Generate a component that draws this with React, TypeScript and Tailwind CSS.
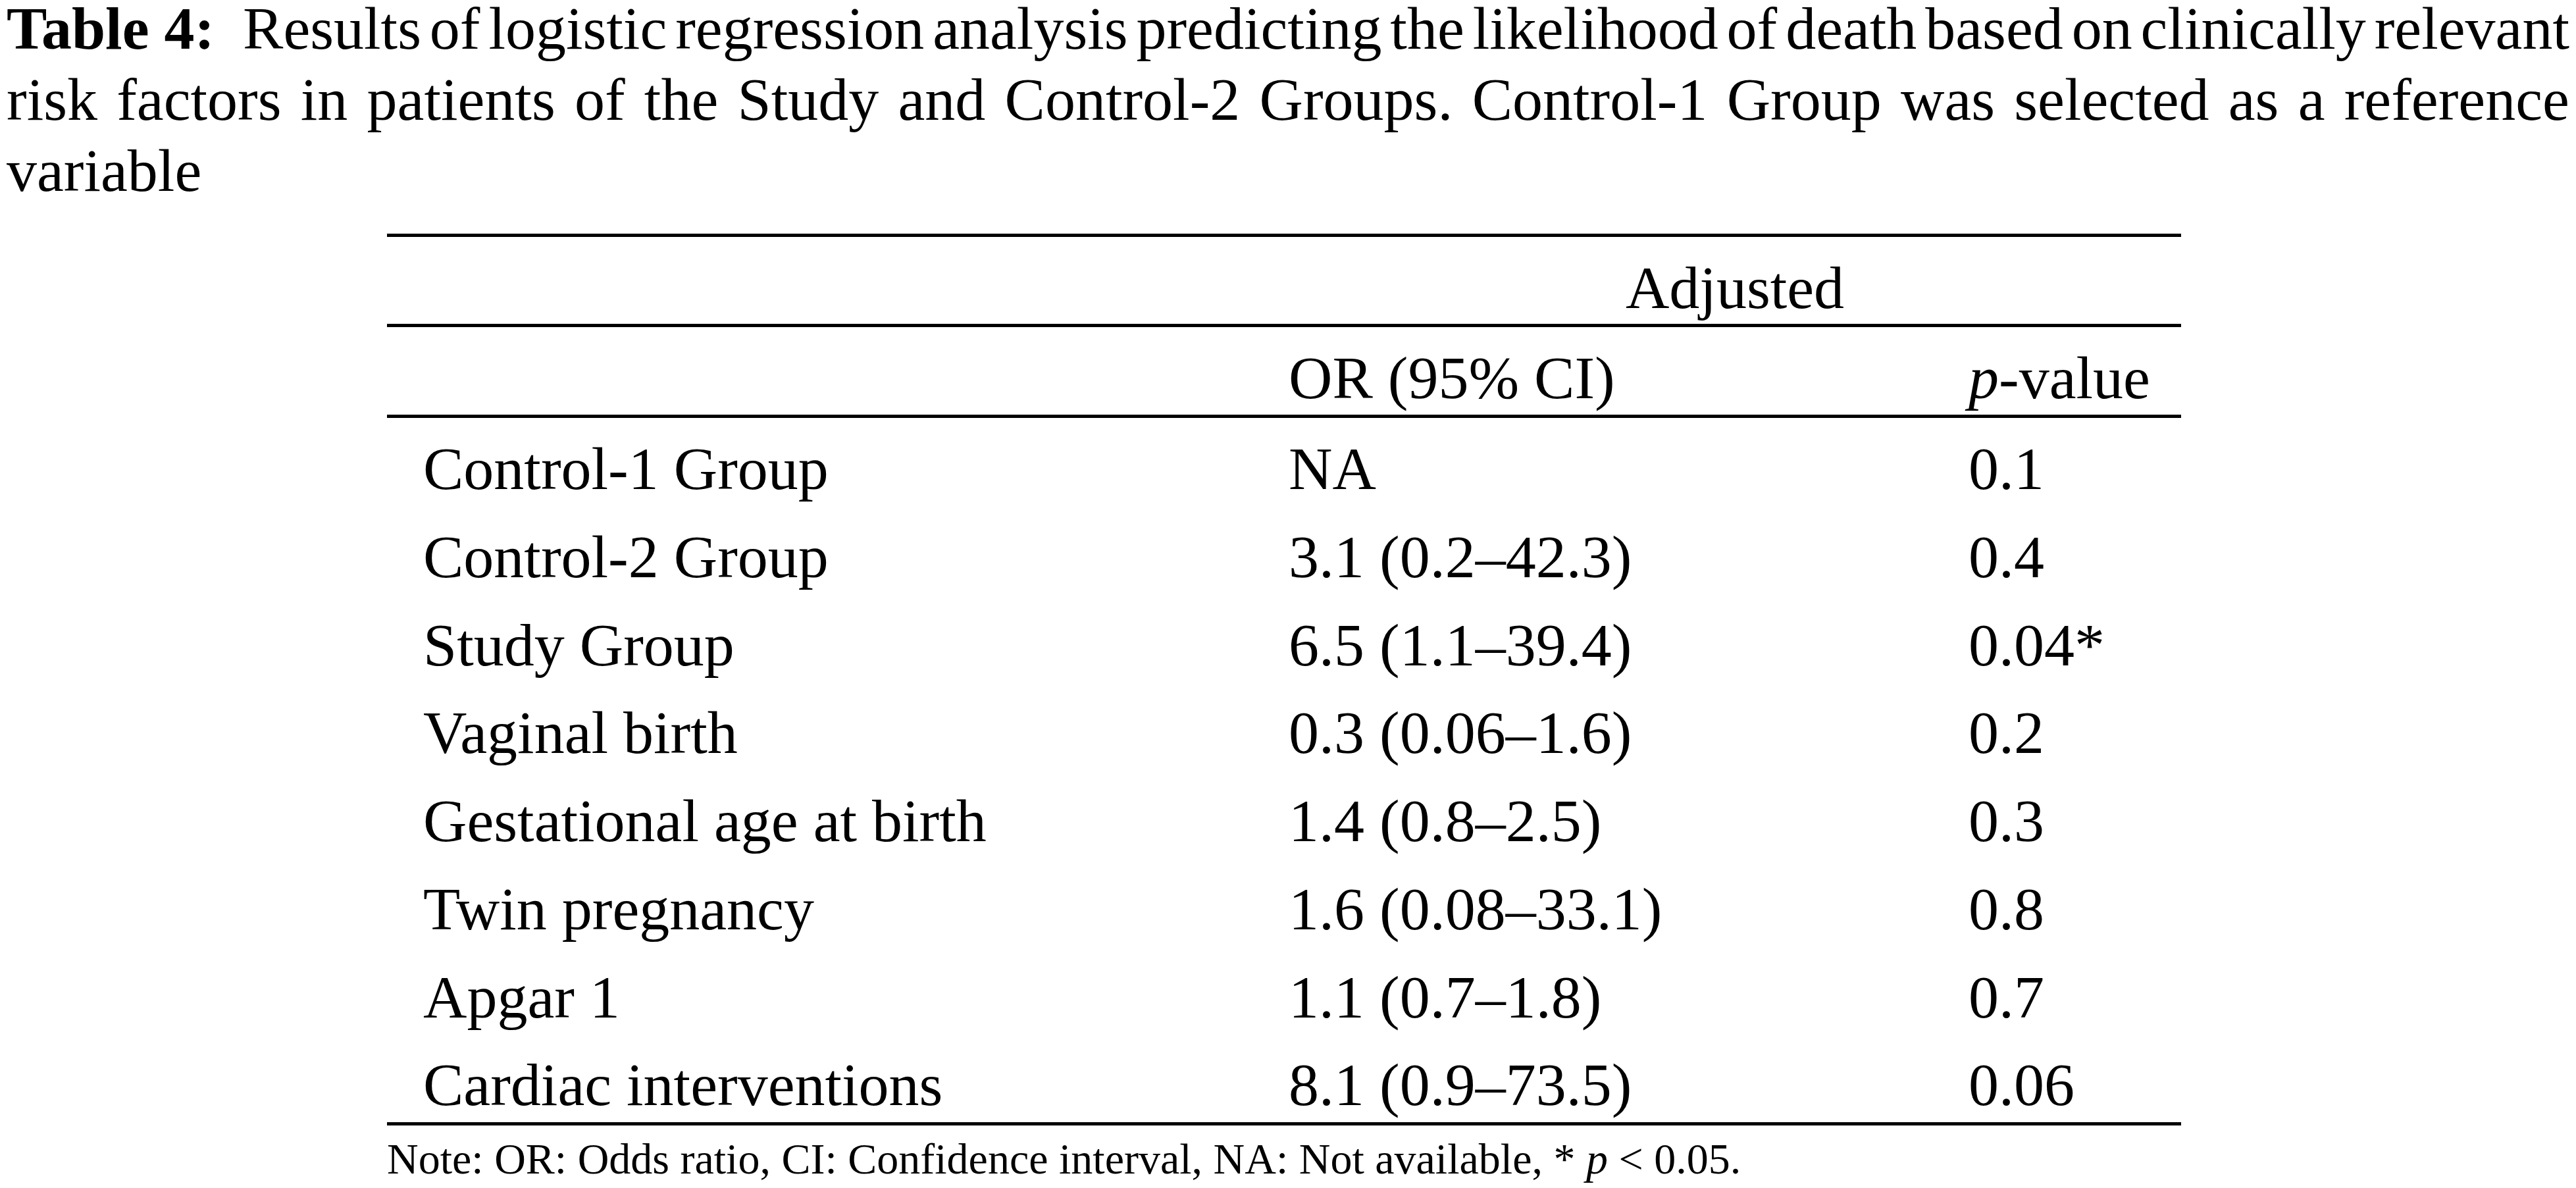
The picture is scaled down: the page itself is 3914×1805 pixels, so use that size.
import React from "react";

const line1 = [
  "Results",
  "of",
  "logistic",
  "regression",
  "analysis",
  "predicting",
  "the",
  "likelihood",
  "of",
  "death",
  "based",
  "on",
  "clinically",
  "relevant",
];

const line2 = [
  "risk",
  "factors",
  "in",
  "patients",
  "of",
  "the",
  "Study",
  "and",
  "Control-2",
  "Groups.",
  "Control-1",
  "Group",
  "was",
  "selected",
  "as",
  "a",
  "reference",
];

const rows: [string, string, string][] = [
  ["Control-1 Group", "NA", "0.1"],
  ["Control-2 Group", "3.1 (0.2–42.3)", "0.4"],
  ["Study Group", "6.5 (1.1–39.4)", "0.04*"],
  ["Vaginal birth", "0.3 (0.06–1.6)", "0.2"],
  ["Gestational age at birth", "1.4 (0.8–2.5)", "0.3"],
  ["Twin pregnancy", "1.6 (0.08–33.1)", "0.8"],
  ["Apgar 1", "1.1 (0.7–1.8)", "0.7"],
  ["Cardiac interventions", "8.1 (0.9–73.5)", "0.06"],
];

export default function App() {
  return (
    <div className="w-[3914px] h-[1805px] overflow-hidden bg-white text-black font-['Liberation_Serif','Times_New_Roman',serif]">
      {/* Caption */}
      <div className="pl-[10px] w-[3904px] text-[92px] leading-[108px] -mt-[11px]">
        <div className="flex justify-between whitespace-nowrap">
          <span className="font-bold mr-[30px]">Table 4:</span>
          {line1.map((w, i) => (
            <span key={i}>{w}</span>
          ))}
        </div>
        <div className="flex justify-between whitespace-nowrap">
          {line2.map((w, i) => (
            <span key={i}>{w}</span>
          ))}
        </div>
        <div className="whitespace-nowrap">variable</div>
      </div>

      {/* Table */}
      <div className="ml-[588px] w-[2726px] mt-[42px]">
        <table className="w-[2726px] table-fixed border-separate border-spacing-0 border-t-[5px] border-black text-[92px]">
          <colgroup>
            <col className="w-[1315px]" />
            <col className="w-[1033px]" />
            <col className="w-[378px]" />
          </colgroup>
          <thead>
            <tr>
              <th className="p-0 border-b-[5px] border-black"></th>
              <th
                colSpan={2}
                className="p-0 pl-[55px] pt-[26px] pb-[4px] leading-[102px] font-normal text-center whitespace-nowrap border-b-[5px] border-black"
              >
                Adjusted
              </th>
            </tr>
            <tr>
              <th className="p-0 border-b-[5px] border-black"></th>
              <th className="p-0 pl-[55px] pt-[26px] pb-[5px] leading-[102px] font-normal text-left whitespace-nowrap border-b-[5px] border-black">
                OR (95% CI)
              </th>
              <th className="p-0 pl-[55px] pt-[26px] pb-[5px] leading-[102px] font-normal text-left whitespace-nowrap border-b-[5px] border-black">
                <i>p</i>-value
              </th>
            </tr>
          </thead>
          <tbody>
            {rows.map((r, i) => {
              const last = i === rows.length - 1;
              const cls = last
                ? "p-0 pl-[55px] pt-[26px] pb-[5.75px] leading-[102px] text-left whitespace-nowrap border-b-[5px] border-black"
                : "p-0 pl-[55px] pt-[26px] pb-[5.75px] leading-[102px] text-left whitespace-nowrap";
              return (
                <tr key={i}>
                  <td className={cls}>{r[0]}</td>
                  <td className={cls}>{r[1]}</td>
                  <td className={cls}>{r[2]}</td>
                </tr>
              );
            })}
          </tbody>
        </table>
        <div className="mt-[13px] text-[66px] leading-[76px] whitespace-nowrap">
          Note: OR: Odds ratio, CI: Confidence interval, NA: Not available, * <i>p</i> &lt; 0.05.
        </div>
      </div>
    </div>
  );
}
